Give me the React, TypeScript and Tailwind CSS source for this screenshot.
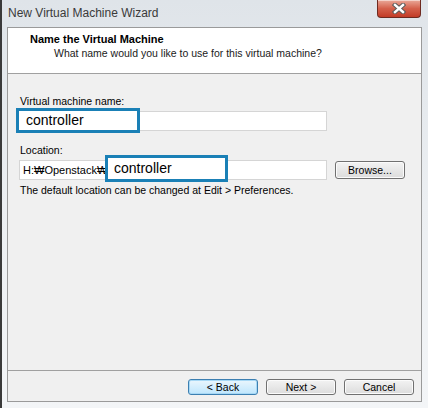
import React from 'react';

const font = { fontFamily: '"Liberation Sans", "Noto Sans CJK KR", Arial, sans-serif' };

function CloseButton() {
  return (
    <div className="absolute right-[7px] top-0 flex h-[18px] w-[44px] items-center justify-center rounded-b-[4px] border border-t-0 border-[#6e2a20] bg-gradient-to-b from-[#e9a899] via-[#d4604b] to-[#c23b26] shadow-[inset_0_1px_0_rgba(255,255,255,0.5)]">
      <svg width="14" height="11" viewBox="0 0 14 11">
        <path d="M3 2 L11 9 M11 2 L3 9" stroke="#5a5a5a" strokeWidth="4.4" strokeLinecap="square" />
        <path d="M3 2 L11 9 M11 2 L3 9" stroke="#ffffff" strokeWidth="2.4" strokeLinecap="square" />
      </svg>
    </div>
  );
}

function WizardButton({ label, isDefault }: { label: string; isDefault?: boolean }) {
  return (
    <button
      type="button"
      className={`flex h-[16px] w-[70px] items-center justify-center rounded-[3px] border text-[10.5px] leading-none text-black ${
        isDefault
          ? 'border-[#3c7fb1] bg-gradient-to-b from-[#eaf6fd] to-[#bee6fd] shadow-[inset_0_0_0_1px_#a7d8f5]'
          : 'border-[#707070] bg-gradient-to-b from-[#f3f3f3] to-[#dcdcdc] shadow-[inset_0_0_0_1px_#fbfbfb]'
      }`}
    >
      {label}
    </button>
  );
}

export default function App() {
  return (
    <div
      className="relative flex h-[408px] w-[428px] flex-col overflow-hidden border-l-2 border-[#3a3a3a] bg-gradient-to-b from-[#dfe4e9] via-[#eceff2] to-[#f3f5f7]"
      style={font}
    >
      <div className="flex h-[27px] shrink-0 items-center pl-[6px] pb-[1px] text-[12px] text-[#3a3a3a]">
        New Virtual Machine Wizard
      </div>
      <CloseButton />

      <div className="ml-[5px] mr-[6px] flex h-[375px] flex-col border border-[#9a9a9a] bg-[#f0f0f0]">
        <div className="flex h-[46px] shrink-0 flex-col border-b border-[#a0a0a0] bg-white pl-[22px] pt-[5px]">
          <div className="text-[11px] font-bold leading-[13px] text-black">Name the Virtual Machine</div>
          <div className="mt-px pl-[24px] text-[10.5px] leading-[13px] text-[#1a1a1a]">
            What name would you like to use for this virtual machine?
          </div>
        </div>

        <div className="flex flex-1 flex-col pl-[11px] pt-[21px] text-[10.5px] leading-[13px] text-black">
          <div className="pl-px">Virtual machine name:</div>
          <div className="relative mt-[3px] h-[20px] w-[308px] border border-[#d5d5d5] bg-white">
            <div className="absolute left-[-4px] top-[-4px] flex h-[25px] w-[124px] items-center border-[3px] border-[#1a80b6] bg-white pl-[7px] text-[14px]">
              controller
            </div>
          </div>

          <div className="mt-[13px] pl-px">Location:</div>
          <div className="mt-[3px] flex items-center gap-2">
            <div className="relative flex h-[20px] w-[308px] items-center border border-[#d5d5d5] bg-white pl-[3px] text-[11px]">
              H:₩Openstack₩
              <div className="absolute left-[85px] top-[-6px] flex h-[27px] w-[123px] items-center border-[3px] border-[#1a80b6] bg-white pl-[6px] text-[14px]">
                controller
              </div>
            </div>
            <button
              type="button"
              className="flex h-[18px] w-[70px] items-center justify-center rounded-[3px] border border-[#707070] bg-gradient-to-b from-[#f3f3f3] to-[#dcdcdc] text-[10.5px] leading-none shadow-[inset_0_0_0_1px_#fbfbfb]"
            >
              Browse...
            </button>
          </div>
          <div className="mt-[4px] pl-px">The default location can be changed at Edit &gt; Preferences.</div>
        </div>

        <div className="flex h-[31px] shrink-0 items-start justify-end gap-2 border-t border-[#a0a0a0] pr-[7px] pt-[8px]">
          <WizardButton label="< Back" isDefault />
          <WizardButton label="Next >" />
          <WizardButton label="Cancel" />
        </div>
      </div>
    </div>
  );
}
